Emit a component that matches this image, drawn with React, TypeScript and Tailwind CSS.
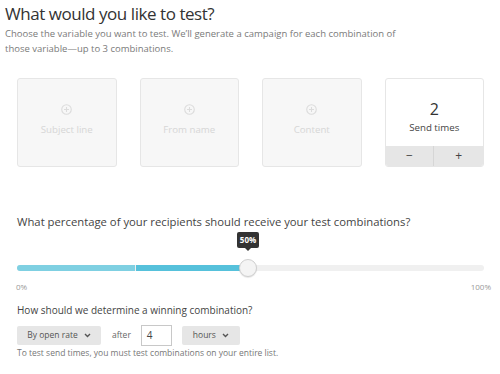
import React from "react";

function PlusCircle() {
  return (
    <svg width="11" height="11" viewBox="0 0 12 12" fill="none">
      <circle cx="6" cy="6" r="5.2" stroke="#dcdcdc" strokeWidth="1.2" />
      <path d="M6 3.3v5.4M3.3 6h5.4" stroke="#dcdcdc" strokeWidth="1.2" />
    </svg>
  );
}

function Chevron() {
  return (
    <svg width="7" height="5" viewBox="0 0 7 5" fill="none">
      <path d="M1 1l2.5 2.5L6 1" stroke="#555" strokeWidth="1.4" />
    </svg>
  );
}

function EmptyCard({ label }: { label: string }) {
  return (
    <div className="h-[89px] rounded-[3px] border border-[#e6e6e6] bg-[#f7f7f7] flex flex-col items-center pt-[25px]">
      <PlusCircle />
      <div className="mt-[8px] text-[9.7px] leading-[13px] text-[#d6d6d6]">{label}</div>
    </div>
  );
}

export default function App() {
  return (
    <div
      className="w-[500px] h-[374px] bg-white overflow-hidden relative"
      style={{ fontFamily: '"Open Sans", "Liberation Sans", sans-serif' }}
    >
      <div className="pl-[5px] pt-[2px]">
        <h1 className="text-[17px] leading-[24px] text-[#333] tracking-[-0.45px]">What would you like to test?</h1>
        <p className="text-[9.5px] leading-[15px] text-[#7a7a7a] w-[420px]">
          Choose the variable you want to test. We’ll generate a campaign for each combination of
          <br />
          those variable—up to 3 combinations.
        </p>
      </div>

      <div className="mt-[22px] ml-[17px] w-[467px] grid grid-cols-4 gap-x-[23px]">
        <EmptyCard label="Subject line" />
        <EmptyCard label="From name" />
        <EmptyCard label="Content" />
        <div className="h-[89px] rounded-[3px] border border-[#e6e6e6] bg-white flex flex-col overflow-hidden">
          <div className="flex-1 flex flex-col items-center pt-[21px]">
            <div className="text-[16px] leading-[18px] text-[#333]">2</div>
            <div className="mt-[3px] text-[9.7px] leading-[13px] text-[#444]">Send times</div>
          </div>
          <div className="h-[20px] grid grid-cols-2 bg-[#e6e6e6] text-[#444]">
            <div className="flex items-center justify-center border-r border-[#d6d6d6] text-[12px]">−</div>
            <div className="flex items-center justify-center text-[12px]">+</div>
          </div>
        </div>
      </div>

      <div className="mt-[47px] ml-[17px] w-[467px]">
        <div className="text-[11.3px] leading-[16px] text-[#444]">
          What percentage of your recipients should receive your test combinations?
        </div>
        <div className="relative mt-[35px] h-[6px] rounded-full bg-[#f0f0f0]">
          <div className="absolute left-0 top-0 h-[6px] w-[118px] rounded-l-full bg-[#7fd0e2]" />
          <div className="absolute left-[119px] top-0 h-[6px] w-[113px] bg-[#56c1db]" />
          <div className="absolute left-[222px] top-[-6px] w-[18px] h-[18px] rounded-full bg-[#f4f4f4] border border-[#cfcfcf] shadow-[0_1px_1px_rgba(0,0,0,0.1)]" />
          <div className="absolute left-[220px] top-[-33px] w-[22px] h-[16px] bg-[#333] rounded-[2px] flex items-center justify-center text-[8px] font-bold text-white">
            50%
          </div>
          <div className="absolute left-[228px] top-[-17px] w-0 h-0 border-l-[3px] border-r-[3px] border-t-[3px] border-l-transparent border-r-transparent border-t-[#333]" />
        </div>
        <div className="mt-[11px] flex justify-between text-[8px] leading-[10px] text-[#999] mr-[-7px] ml-[-1px]">
          <span>0%</span>
          <span>100%</span>
        </div>
      </div>

      <div className="mt-[11px] ml-[17px]">
        <div className="text-[10px] leading-[14px] text-[#444]">How should we determine a winning combination?</div>
        <div className="mt-[8px] flex items-center h-[20px]">
          <div className="w-[84px] h-[19px] bg-[#e6e6e6] rounded-[2px] flex items-center justify-center gap-[6px] text-[8.5px] text-[#555]">
            By open rate <Chevron />
          </div>
          <span className="ml-[11px] text-[8.5px] text-[#666]">after</span>
          <div className="ml-[10px] w-[31px] h-[21px] border border-[#c8c8c8] bg-white flex items-center pl-[5px] text-[10px] text-[#444]">4</div>
          <div className="ml-[10px] w-[58px] h-[19px] bg-[#e6e6e6] rounded-[2px] flex items-center justify-center gap-[6px] text-[8.5px] text-[#555]">
            hours <Chevron />
          </div>
        </div>
        <div className="mt-[2px] text-[8.5px] leading-[12px] text-[#777]">
          To test send times, you must test combinations on your entire list.
        </div>
      </div>
    </div>
  );
}
